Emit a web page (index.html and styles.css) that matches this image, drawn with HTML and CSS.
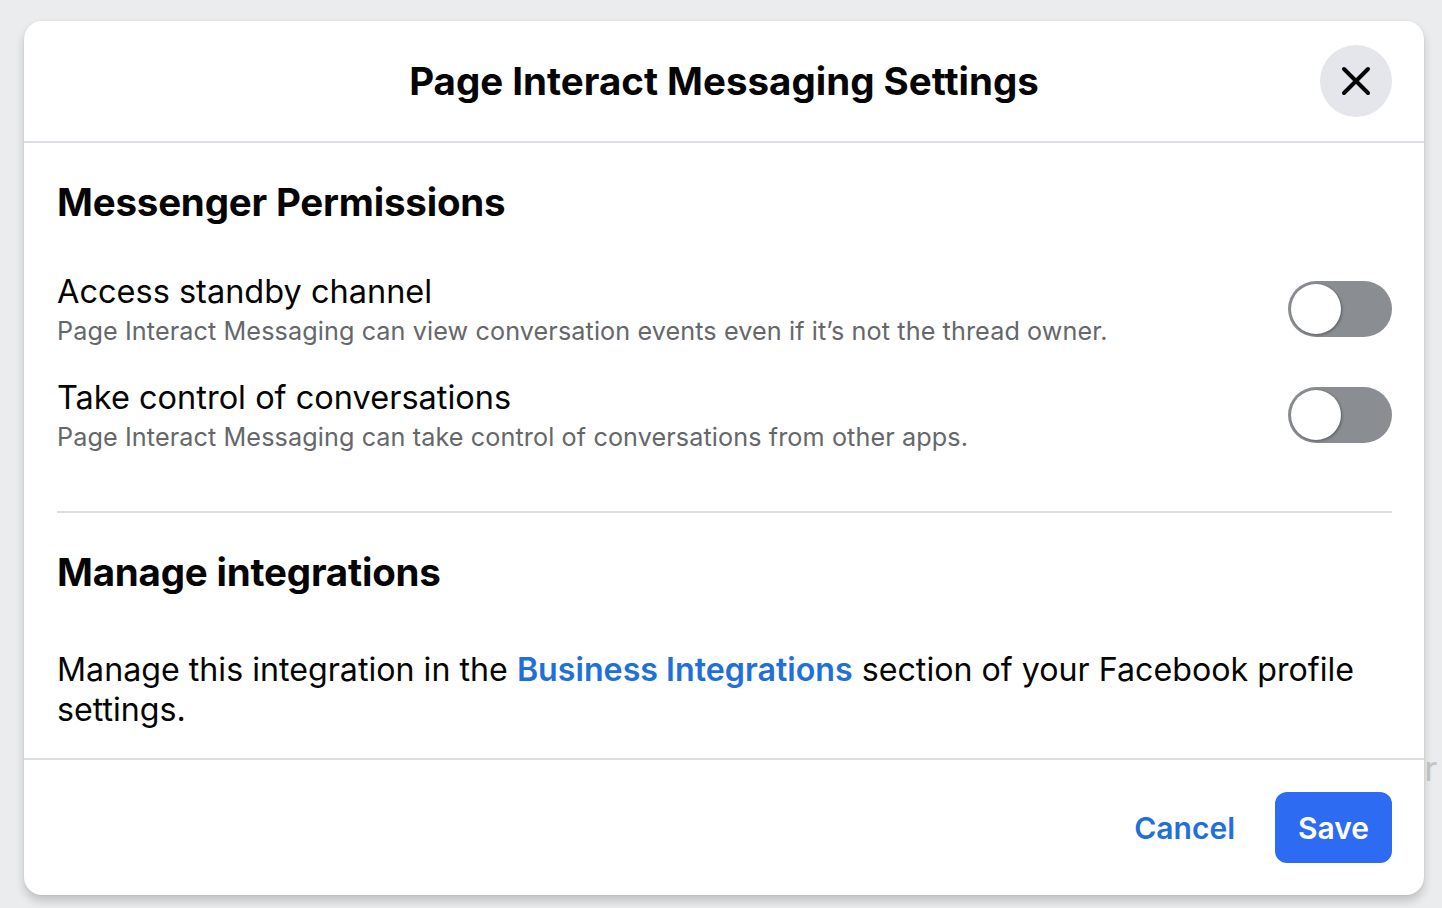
FILE: index.html
```html
<!DOCTYPE html>
<html lang="en">

<head>
    <meta charset="UTF-8">
    <meta name="viewport" content="width=device-width, initial-scale=1.0">
    <title>Page Interact Messaging Settings</title>
    <link rel="stylesheet" href="styles.css">
</head>

<body>
    <div class="backdrop">
        <span class="behind-text">or</span>

        <div class="modal">
            <div class="modal-header">
                <h1>Page Interact Messaging Settings</h1>
                <button class="btn-close" aria-label="Close">
                    <svg width="30" height="30" viewBox="0 0 30 30">
                        <path d="M3 3 L27 27 M27 3 L3 27" stroke="#050505" stroke-width="4" stroke-linecap="round" />
                    </svg>
                </button>
            </div>

            <div class="modal-body">
                <h2 class="section-title">Messenger Permissions</h2>

                <div class="perm-list">
                    <div class="perm">
                        <div class="perm-text">
                            <div class="perm-name">Access standby channel</div>
                            <div class="perm-desc">Page Interact Messaging can view conversation events even if it’s not the thread owner.</div>
                        </div>
                        <span class="toggle"><span class="knob"></span></span>
                    </div>
                    <div class="perm">
                        <div class="perm-text">
                            <div class="perm-name">Take control of conversations</div>
                            <div class="perm-desc">Page Interact Messaging can take control of conversations from other apps.</div>
                        </div>
                        <span class="toggle"><span class="knob"></span></span>
                    </div>
                </div>

                <hr class="sep">

                <h2 class="section-title">Manage integrations</h2>
                <p class="integration-text">Manage this integration in the <a href="#">Business Integrations</a> section of your Facebook profile settings.</p>
            </div>

            <div class="modal-footer">
                <button class="btn btn-cancel">Cancel</button>
                <button class="btn btn-save">Save</button>
            </div>
        </div>
    </div>
</body>

</html>
```

FILE: styles.css
```css
body {
    margin: 0;
    font-family: Inter, "Noto Sans", Arial, sans-serif;
    background-color: #ebeced;
    color: #050505;
}

.backdrop {
    position: relative;
    height: 908px;
    padding: 21px 18px 0 24px;
    box-sizing: border-box;
    overflow: hidden;
}

.behind-text {
    position: absolute;
    left: 1404px;
    top: 748px;
    font-size: 34px;
    color: #c4c5c7;
}

.modal {
    position: relative;
    width: 1400px;
    height: 874px;
    background-color: white;
    border-radius: 18px;
    box-shadow: 0 6px 10px rgba(0, 0, 0, 0.18), 0 0 2px rgba(0, 0, 0, 0.08);
    display: flex;
    flex-direction: column;
}

.modal-header {
    position: relative;
    height: 120px;
    border-bottom: 2px solid #dadde1;
    display: flex;
    align-items: center;
    justify-content: center;
}

.modal-header h1 {
    margin: 0;
    font-size: 38.5px;
    font-weight: 700;
    letter-spacing: 0;
}

.btn-close {
    position: absolute;
    right: 32px;
    top: 24px;
    width: 72px;
    height: 72px;
    border: none;
    border-radius: 50%;
    background-color: #e4e6eb;
    display: flex;
    align-items: center;
    justify-content: center;
    cursor: pointer;
    padding: 0;
}

.modal-body {
    flex: 1;
    padding: 0 32px 0 33px;
}

.section-title {
    margin: 0;
    font-size: 38.5px;
    font-weight: 700;
    letter-spacing: -0.2px;
}

.modal-body > .section-title:first-child {
    margin-top: 36px;
}

.perm-list {
    margin-top: 45px;
    display: flex;
    flex-direction: column;
    gap: 28px;
}

.perm {
    display: flex;
    align-items: center;
    justify-content: space-between;
}

.perm-name {
    font-size: 32.5px;
    line-height: 44px;
}

.perm-desc {
    font-size: 25.2px;
    line-height: 34px;
    color: #65676b;
    letter-spacing: 0.1px;
}

.toggle {
    position: relative;
    width: 104px;
    height: 56px;
    border-radius: 28px;
    background-color: #8a8d91;
    flex-shrink: 0;
}

.knob {
    position: absolute;
    left: 3px;
    top: 3px;
    width: 50px;
    height: 50px;
    border-radius: 50%;
    background-color: white;
    box-shadow: 1px 1px 3px rgba(0, 0, 0, 0.35);
}

.sep {
    border: none;
    border-top: 2px solid #dadde1;
    margin: 57px 0 0 0;
}

.modal-body > .sep + .section-title {
    margin-top: 36px;
}

.integration-text {
    margin: 55px 0 0 0;
    font-size: 32.2px;
    line-height: 40px;
}

.integration-text a {
    color: #216fdb;
    font-weight: 600;
    text-decoration: none;
}

.modal-footer {
    border-top: 2px solid #dadde1;
    height: 137px;
    box-sizing: border-box;
    padding: 0 32px;
    display: flex;
    align-items: center;
    justify-content: flex-end;
    gap: 40px;
}

.btn {
    font-family: inherit;
    font-size: 30px;
    font-weight: 600;
    border: none;
    cursor: pointer;
}

.btn-cancel {
    background: none;
    color: #216fdb;
    padding: 0;
}

.btn-save {
    width: 117px;
    height: 71px;
    border-radius: 12px;
    background-color: #2d6bf2;
    color: white;
}
```
